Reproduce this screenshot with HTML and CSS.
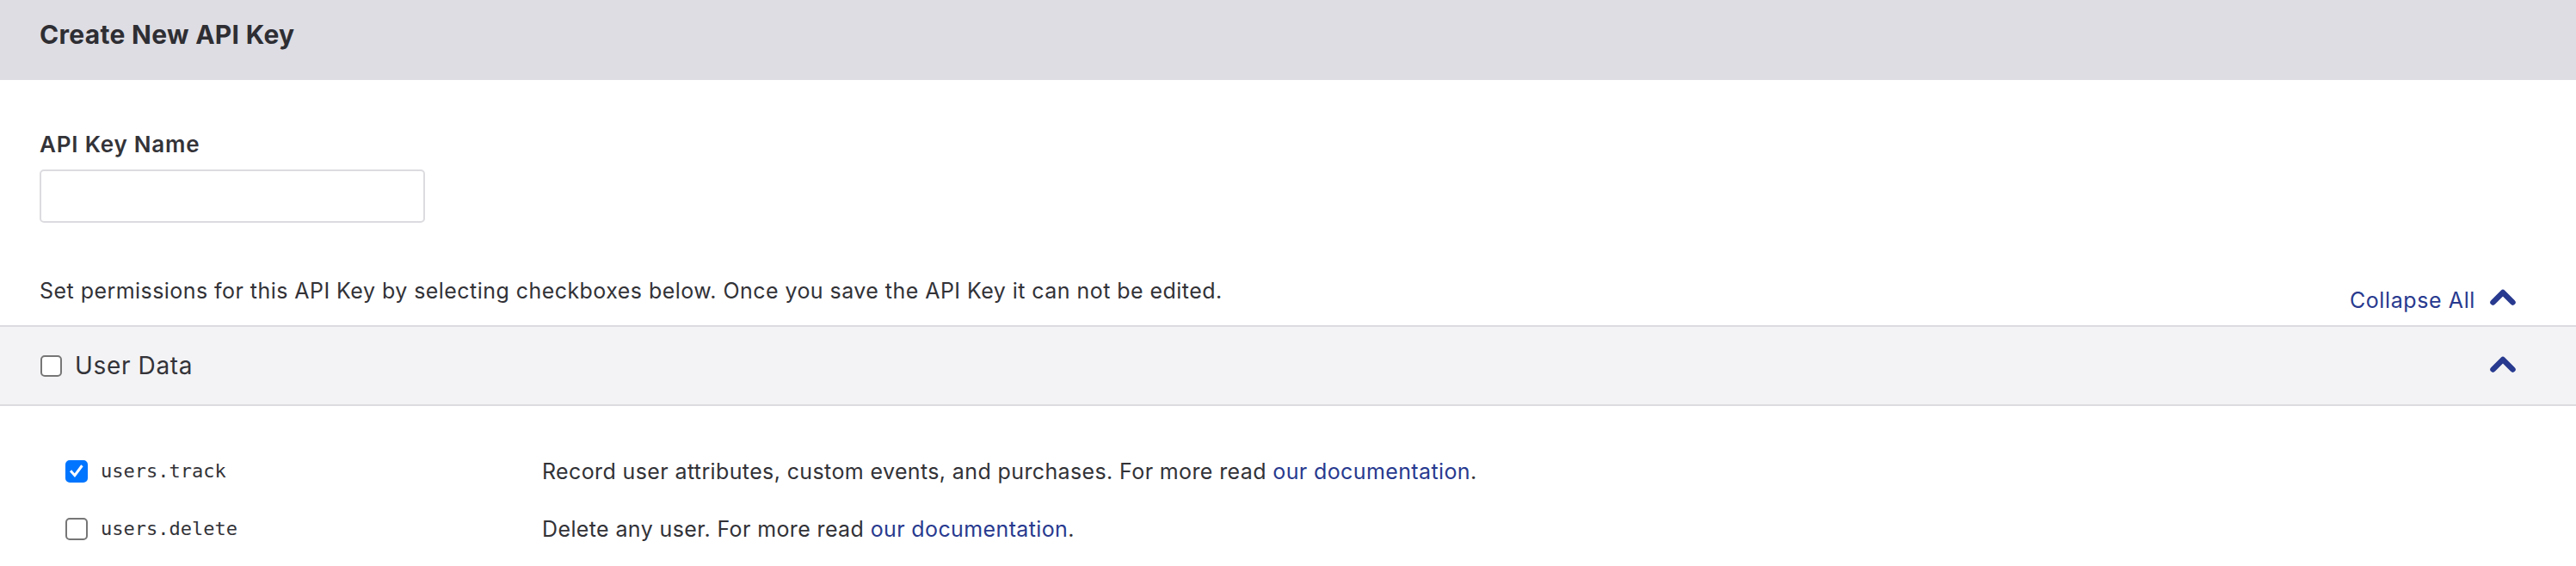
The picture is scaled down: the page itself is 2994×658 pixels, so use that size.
FILE: index.html
```html
<!DOCTYPE html>
<html lang="en">
<head>
<meta charset="utf-8">
<title>Create New API Key</title>
<link rel="stylesheet" href="styles.css">
</head>
<body>
<header class="page-header">
  <h1 class="page-title">Create New API Key</h1>
</header>
<main class="content">
  <section class="name-field">
    <label class="field-label" for="keyname">API Key Name</label>
    <input class="text-input" id="keyname" type="text">
  </section>
  <div class="perm-bar">
    <p class="perm-info">Set permissions for this API Key by selecting checkboxes below. Once you save the API Key it can not be edited.</p>
    <button class="collapse-all" type="button">Collapse All
      <svg class="chevron" viewBox="0 0 32 21" width="32" height="21"><polyline points="4.5,16.5 16,5 27.5,16.5" fill="none" stroke="currentColor" stroke-width="6.5" stroke-linecap="round" stroke-linejoin="round"/></svg>
    </button>
  </div>
</main>
<section class="group">
  <div class="group-head">
    <label class="group-title"><input class="box" type="checkbox"> User Data</label>
    <svg class="chevron group-chevron" viewBox="0 0 32 21" width="32" height="21"><polyline points="4.5,16.5 16,5 27.5,16.5" fill="none" stroke="currentColor" stroke-width="6.5" stroke-linecap="round" stroke-linejoin="round"/></svg>
  </div>
  <div class="group-body">
    <div class="perm-row">
      <input class="box box-small" type="checkbox" checked>
      <code class="perm-name">users.track</code>
      <p class="perm-desc">Record user attributes, custom events, and purchases. For more read <a href="#">our documentation</a>.</p>
    </div>
    <div class="perm-row">
      <input class="box box-small" type="checkbox">
      <code class="perm-name">users.delete</code>
      <p class="perm-desc">Delete any user. For more read <a href="#">our documentation</a>.</p>
    </div>
  </div>
</section>
</body>
</html>
```

FILE: styles.css
```css
* { box-sizing: border-box; }
html, body { margin: 0; padding: 0; background: #ffffff; }
body {
  font-family: Inter, Lato, "Liberation Sans", sans-serif;
  color: #323237;
  width: 2994px;
}
.page-header {
  height: 93px;
  background: #dedde3;
  padding-left: 46px;
  display: flex;
  align-items: center;
}
.page-title {
  margin: 0;
  font-size: 30px;
  font-weight: 700;
  color: #2e2e33;
  line-height: 1;
  margin-top: -13px;
  letter-spacing: 0.3px;
}
.content { padding: 0 69px 0 46px; }
.name-field {
  padding-top: 60px;
  display: flex;
  flex-direction: column;
}
.field-label {
  font-size: 26px;
  font-weight: 600;
  line-height: 30px;
  margin-bottom: 14px;
  color: #333338;
  letter-spacing: 0.8px;
}
.text-input {
  width: 448px;
  height: 62px;
  border: 2px solid #dcdce0;
  border-radius: 5px;
  background: #fff;
  outline: none;
}
.perm-bar {
  display: flex;
  justify-content: space-between;
  align-items: flex-start;
  padding-top: 64px;
  padding-bottom: 14px;
}
.perm-info {
  margin: 0;
  font-size: 25px;
  line-height: 30px;
  letter-spacing: 0.45px;
}
.collapse-all {
  margin: 11px 0 0 0;
  padding: 0;
  border: 0;
  background: none;
  font: inherit;
  font-size: 25px;
  line-height: 30px;
  letter-spacing: 0.6px;
  color: #283a8f;
  display: flex;
  align-items: center;
  gap: 16px;
}
.chevron { display: block; color: #283a8f; }
.collapse-all .chevron { margin-top: -8px; }
.group {
  border-top: 2px solid #dcdce0;
}
.group-head {
  height: 92px;
  background: #f3f3f5;
  border-bottom: 2px solid #dcdce0;
  display: flex;
  align-items: center;
  justify-content: space-between;
  padding: 0 69px 0 47px;
}
.group-title {
  display: flex;
  align-items: center;
  gap: 15px;
  font-size: 28px;
  line-height: 30px;
  letter-spacing: 0.65px;
  color: #333338;
}
.box {
  appearance: none;
  -webkit-appearance: none;
  margin: 0;
  width: 25px;
  height: 25px;
  border: 2px solid #767676;
  border-radius: 5px;
  background: #fff;
}
.box:checked {
  background: #0075ff;
  border-color: #0075ff;
  background-image: url("data:image/svg+xml;utf8,<svg xmlns='http://www.w3.org/2000/svg' viewBox='0 0 26 26'><polyline points='6,13.5 10.5,18.5 19.5,6.5' fill='none' stroke='white' stroke-width='3.6' stroke-linecap='square'/></svg>");
  background-size: 100% 100%;
}
.box-small { width: 26px; height: 26px; }
.group-chevron { margin-top: -4px; }
.group-body { padding-top: 42px; }
.perm-row {
  display: grid;
  grid-template-columns: 26px 498px 1fr;
  column-gap: 15px;
  align-items: center;
  height: 67px;
  padding-left: 76px;
}
.perm-name {
  font-family: "DejaVu Sans Mono", "Liberation Mono", monospace;
  font-size: 22px;
  color: #333338;
}
.perm-desc {
  margin: 0;
  font-size: 25px;
  line-height: 30px;
  letter-spacing: 0.38px;
}
.perm-desc a {
  color: #283a8f;
  text-decoration: none;
}
```
